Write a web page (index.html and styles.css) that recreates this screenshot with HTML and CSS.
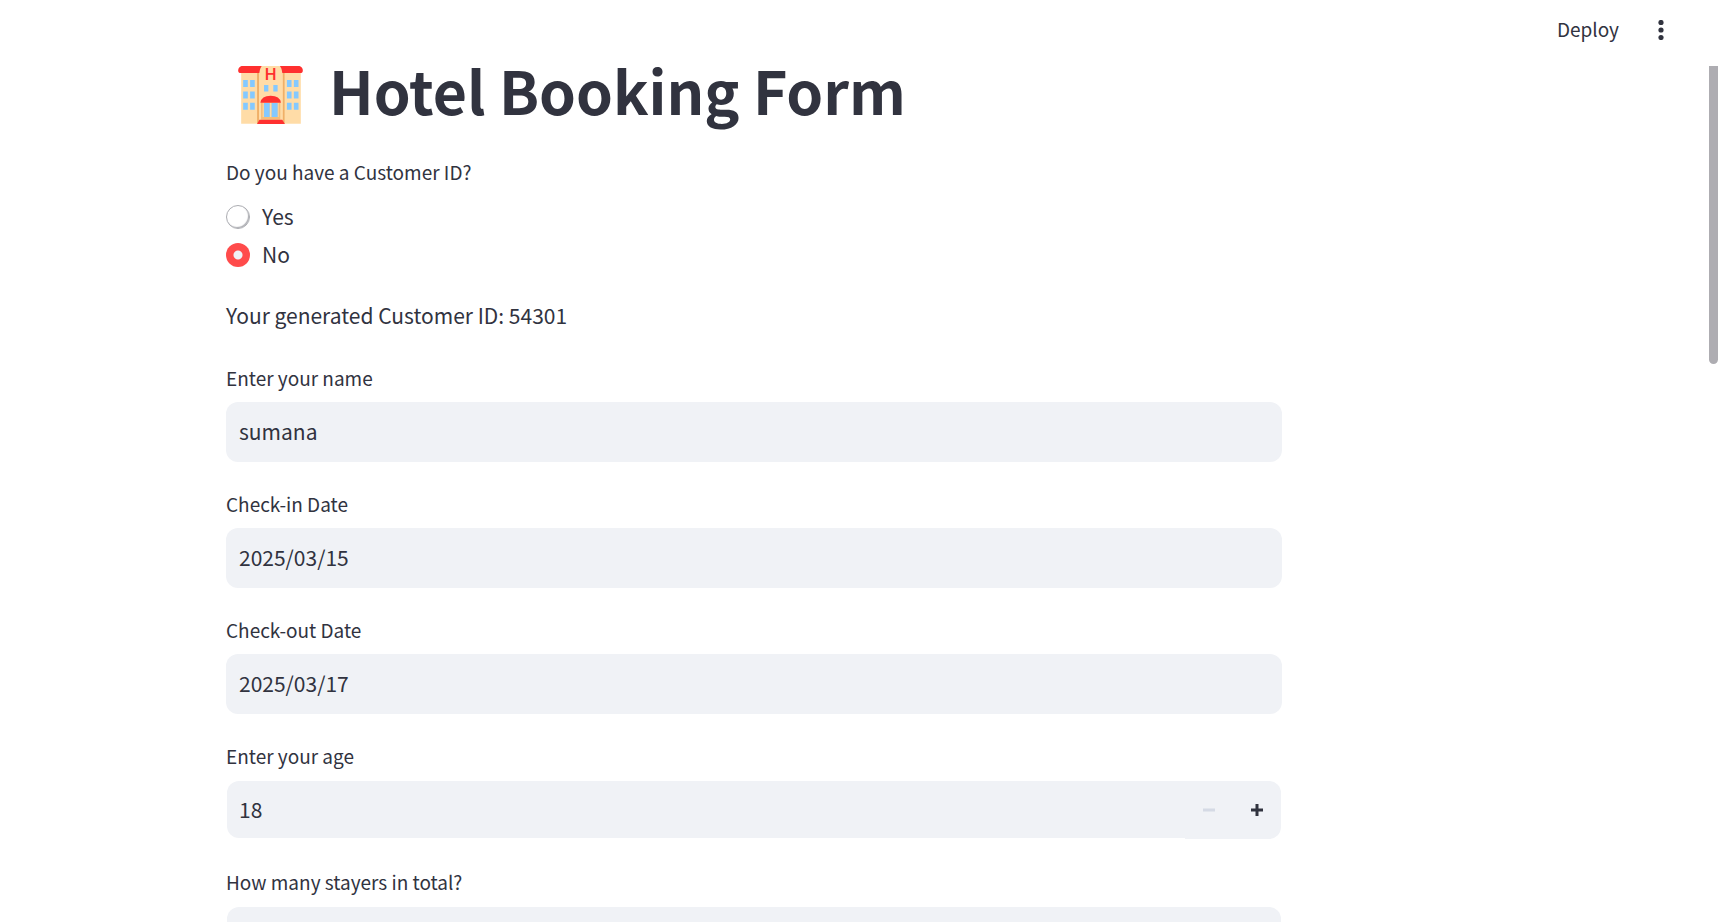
FILE: index.html
```html
<!DOCTYPE html>
<html lang="en">
<head>
<meta charset="utf-8">
<meta name="viewport" content="width=device-width, initial-scale=1">
<title>Hotel Booking Form</title>
<link rel="stylesheet" href="styles.css">
</head>
<body>
<div class="app">
  <header class="toolbar">
    <button class="deploy" type="button">Deploy</button>
    <button class="menu" type="button" aria-label="Main menu">
      <svg width="6" height="20" viewBox="0 0 6 20" fill="currentColor" aria-hidden="true"><circle cx="3" cy="2.5" r="2.6"/><circle cx="3" cy="10" r="2.6"/><circle cx="3" cy="17.5" r="2.6"/></svg>
    </button>
  </header>
  <main class="main">
    <form class="column">
      <h1 class="title">
        <svg class="hotel" viewBox="54 48 195 175" aria-hidden="true">
          <path fill="#ffdca7" d="M63 60h180v162H63z"/>
          <path fill="#ff302f" d="M64 48h175q10 3 10 14q0 7-8 7H62q-8 0-8-7q0-11 10-14z"/>
          <path fill="#f0b068" d="M111 69h6v153h-6zM188 69h6v153h-6z"/>
          <path fill="#ffdca7" d="M117 222V82q0-24 8-34h55q8 10 8 34v140z"/>
          <path fill="#f5bd79" d="M123 159h58v51h-58z"/>
          <path fill="#ffdca7" d="M128 159h3v43h-3zM149 159h6v43h-6zM173 159h3v43h-3z"/>
          <path fill="#84c9ff" d="M132 160h17v42h-17zM155 160h18v42h-18zM132 105h13v20h-13zM160 105h13v20h-13zM69 90h14v21H69zM90 90h14v21H90zM69 125h14v21H69zM90 125h14v21H90zM69 159h14v21H69zM90 159h14v21H90zM201 90h14v21h-14zM222 90h14v21h-14zM201 125h14v21h-14zM222 125h14v21h-14zM201 159h14v21h-14zM222 159h14v21h-14z"/>
          <path fill="#ff302f" d="M121 159q3-21 31-21t31 21zM118 210h69l8 13h-84z"/>
          <text class="hotel-letter" x="152" y="90" text-anchor="middle">H</text>
        </svg>
        <span>Hotel Booking Form</span>
      </h1>

      <fieldset class="choice">
        <legend class="label">Do you have a Customer ID?</legend>
        <label class="option"><input class="radio" type="radio" name="has-id" value="yes">Yes</label>
        <label class="option"><input class="radio" type="radio" name="has-id" value="no" checked>No</label>
      </fieldset>

      <p class="note">Your generated Customer ID: 54301</p>

      <div class="field">
        <label class="label" for="name">Enter your name</label>
        <input class="input" id="name" type="text" value="sumana">
      </div>
      <div class="field">
        <label class="label" for="check-in">Check-in Date</label>
        <input class="input" id="check-in" type="text" value="2025/03/15">
      </div>
      <div class="field">
        <label class="label" for="check-out">Check-out Date</label>
        <input class="input" id="check-out" type="text" value="2025/03/17">
      </div>
      <div class="field">
        <label class="label" for="age">Enter your age</label>
        <div class="number">
          <input class="number-input" id="age" type="text" inputmode="numeric" value="18">
          <button class="step" type="button" aria-label="Decrease age" disabled><svg width="12" height="12" viewBox="0 0 12 12" aria-hidden="true"><path d="M0 6h12" stroke="currentColor" stroke-width="3"/></svg></button>
          <button class="step step-up" type="button" aria-label="Increase age"><svg width="12" height="12" viewBox="0 0 12 12" aria-hidden="true"><path d="M0 6h12M6 0v12" stroke="currentColor" stroke-width="3"/></svg></button>
        </div>
      </div>
      <div class="field">
        <label class="label" for="stayers">How many stayers in total?</label>
        <div class="number">
          <input class="number-input" id="stayers" type="text" inputmode="numeric" value="1">
          <button class="step" type="button" aria-label="Decrease stayers" disabled><svg width="12" height="12" viewBox="0 0 12 12" aria-hidden="true"><path d="M0 6h12" stroke="currentColor" stroke-width="3"/></svg></button>
          <button class="step step-up" type="button" aria-label="Increase stayers"><svg width="12" height="12" viewBox="0 0 12 12" aria-hidden="true"><path d="M0 6h12M6 0v12" stroke="currentColor" stroke-width="3"/></svg></button>
        </div>
      </div>
    </form>
  </main>
  <div class="scroll-thumb"></div>
</div>
</body>
</html>
```

FILE: styles.css
```css
* {
  box-sizing: border-box;
}

body {
  margin: 0;
  background: #fff;
  color: #31333f;
  font-family: "Noto Sans CJK SC", "Noto Sans", sans-serif;
  font-size: 21px;
}

button,
input {
  margin: 0;
  padding: 0;
  border: 0;
  background: none;
  color: inherit;
  font: inherit;
}

.app {
  position: relative;
  height: 100vh;
  overflow: hidden;
}

.toolbar {
  display: flex;
  align-items: center;
  justify-content: flex-end;
  gap: 24px;
  height: 60px;
  padding-right: 39px;
}

.deploy {
  padding-bottom: 2px;
  font-size: 19px;
  line-height: 30px;
}

.menu {
  display: flex;
  align-items: center;
  justify-content: center;
  width: 36px;
  height: 36px;
}

.main {
  padding-right: 210px;
}

.column {
  max-width: 1056px;
  margin: 0 auto;
}

.title {
  display: flex;
  align-items: flex-start;
  gap: 26px;
  margin: 0 0 30px;
  padding-left: 12px;
  font-size: 59px;
  font-weight: 700;
  line-height: 60px;
}

.hotel {
  width: 65px;
  height: 58px;
  margin-top: 6px;
}

.hotel-letter {
  fill: #ff302f;
  font-family: Roboto, sans-serif;
  font-size: 50px;
  font-weight: 500;
}

.label {
  display: block;
  margin-bottom: 6px;
  padding: 0;
  font-size: 19px;
  line-height: 36px;
}

.choice {
  margin: 0 0 24px;
  padding: 0;
  border: 0;
}

.option {
  display: flex;
  align-items: center;
  gap: 12px;
  width: fit-content;
  margin-top: 2px;
  line-height: 36px;
}

.radio {
  width: 24px;
  height: 24px;
  margin-top: 2px;
  appearance: none;
  border: 1px solid #acadb2;
  border-radius: 50%;
  background: #fff;
  box-shadow: inset -1px -1px 1px #acadb2;
}

.radio:checked {
  border: 0;
  background: radial-gradient(circle, #f0f2f6 4px, #ff4b4b 5px);
  box-shadow: none;
}

.note {
  margin: 0 0 26px;
  line-height: 38px;
}

.field {
  margin-bottom: 24px;
}

.input {
  display: block;
  width: 100%;
  height: 60px;
  padding: 0 13px 2px;
  border-radius: 12px;
  background: #f0f2f6;
}

.number {
  display: flex;
  height: 60px;
  padding: 1px;
}

.number-input {
  flex: 1;
  min-width: 0;
  height: 57px;
  padding: 0 12px 2px;
  border-radius: 12px 0 0 12px;
  background: #f0f2f6;
}

.step {
  display: flex;
  align-items: center;
  justify-content: center;
  width: 48px;
  height: 58px;
  background: #f0f2f6;
}

.step:disabled {
  color: #d5dae5;
}

.step-up {
  border-radius: 0 12px 12px 0;
}

.scroll-thumb {
  position: absolute;
  top: 66px;
  right: 0;
  width: 9px;
  height: 298px;
  border-radius: 0 0 5px 5px;
  background: #aeadb2;
}
```
